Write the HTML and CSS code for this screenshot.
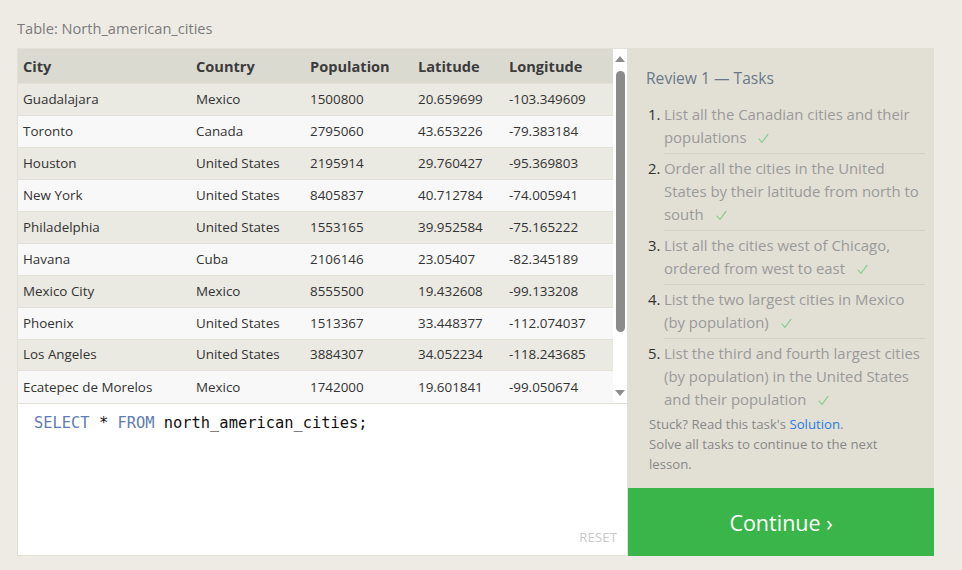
FILE: index.html
```html
<!DOCTYPE html>
<html>
<head>
<meta charset="utf-8">
<link rel="stylesheet" href="styles.css">
</head>
<body>
<div class="page">
  <div class="table-title">Table: North_american_cities</div>
  <div class="workspace">
    <div class="left">
      <div class="results">
        <table class="grid">
          <colgroup>
            <col class="c1"><col class="c2"><col class="c3"><col class="c4"><col class="c5">
          </colgroup>
          <thead>
            <tr><th>City</th><th>Country</th><th>Population</th><th>Latitude</th><th>Longitude</th></tr>
          </thead>
          <tbody>
            <tr><td>Guadalajara</td><td>Mexico</td><td>1500800</td><td>20.659699</td><td>-103.349609</td></tr>
            <tr><td>Toronto</td><td>Canada</td><td>2795060</td><td>43.653226</td><td>-79.383184</td></tr>
            <tr><td>Houston</td><td>United States</td><td>2195914</td><td>29.760427</td><td>-95.369803</td></tr>
            <tr><td>New York</td><td>United States</td><td>8405837</td><td>40.712784</td><td>-74.005941</td></tr>
            <tr><td>Philadelphia</td><td>United States</td><td>1553165</td><td>39.952584</td><td>-75.165222</td></tr>
            <tr><td>Havana</td><td>Cuba</td><td>2106146</td><td>23.05407</td><td>-82.345189</td></tr>
            <tr><td>Mexico City</td><td>Mexico</td><td>8555500</td><td>19.432608</td><td>-99.133208</td></tr>
            <tr><td>Phoenix</td><td>United States</td><td>1513367</td><td>33.448377</td><td>-112.074037</td></tr>
            <tr><td>Los Angeles</td><td>United States</td><td>3884307</td><td>34.052234</td><td>-118.243685</td></tr>
            <tr><td>Ecatepec de Morelos</td><td>Mexico</td><td>1742000</td><td>19.601841</td><td>-99.050674</td></tr>
          </tbody>
        </table>
        <div class="scrollbar">
          <span class="arrow up"></span>
          <span class="thumb"></span>
          <span class="arrow down"></span>
        </div>
      </div>
      <div class="editor">
        <div class="code"><span class="kw">SELECT</span> * <span class="kw">FROM</span> north_american_cities;</div>
        <div class="reset">RESET</div>
      </div>
    </div>
    <div class="right">
      <div class="tasks">
        <div class="tasks-title">Review 1 — Tasks</div>
        <ol class="task-list">
          <li><span class="num">1.</span><span class="txt">List all the Canadian cities and their populations&nbsp;<svg class="check" viewBox="0 0 12 12"><path d="M1.2 6.6 L4.4 10.2 L10.8 1.4"/></svg></span></li>
          <li><span class="num">2.</span><span class="txt">Order all the cities in the United States by their latitude from north to south&nbsp;<svg class="check" viewBox="0 0 12 12"><path d="M1.2 6.6 L4.4 10.2 L10.8 1.4"/></svg></span></li>
          <li><span class="num">3.</span><span class="txt">List all the cities west of Chicago, ordered from west to east&nbsp;<svg class="check" viewBox="0 0 12 12"><path d="M1.2 6.6 L4.4 10.2 L10.8 1.4"/></svg></span></li>
          <li><span class="num">4.</span><span class="txt">List the two largest cities in Mexico (by population)&nbsp;<svg class="check" viewBox="0 0 12 12"><path d="M1.2 6.6 L4.4 10.2 L10.8 1.4"/></svg></span></li>
          <li><span class="num">5.</span><span class="txt">List the third and fourth largest cities (by population) in the United States and their population&nbsp;<svg class="check" viewBox="0 0 12 12"><path d="M1.2 6.6 L4.4 10.2 L10.8 1.4"/></svg></span></li>
        </ol>
        <div class="hint">Stuck? Read this task's <a class="link">Solution</a>.</div>
        <div class="hint">Solve all tasks to continue to the next lesson.</div>
      </div>
      <div class="continue">Continue ›</div>
    </div>
  </div>
</div>
</body>
</html>
```

FILE: styles.css
```css
html, body {
  margin: 0;
  padding: 0;
  background: #eeebe4;
}
body {
  font-family: "Open Sans", "Noto Sans", sans-serif;
  color: #333;
}
.page {
  padding: 17px 0 0 17px;
}
.table-title {
  font-size: 14.6px;
  color: #7b7b7b;
  height: 23px;
  line-height: 22px;
  margin-bottom: 8px;
}
.workspace {
  display: flex;
  width: 917px;
  height: 508px;
}
.left {
  width: 611px;
  box-sizing: border-box;
  background: #fff;
  border: 1px solid #e2e0d8;
  display: flex;
  flex-direction: column;
}
.results {
  display: flex;
  height: 354px;
  border-bottom: 1px solid #e2e0d8;
}
.grid {
  width: 595px;
  border-collapse: collapse;
  table-layout: fixed;
  font-size: 13.4px;
}
.c1 { width: 173px; }
.c2 { width: 114px; }
.c3 { width: 108px; }
.c4 { width: 91px; }
.c5 { width: 109px; }
.grid th {
  background: #dbdad0;
  text-align: left;
  font-weight: 700;
  font-size: 14.6px;
  color: #3c3c3c;
  height: 34px;
  padding: 0 0 0 5px;
}
.grid td {
  height: 31px;
  padding: 0 0 1px 5px;
  box-sizing: border-box;
  border-top: 1px solid #e2e0d8;
  white-space: nowrap;
  color: #333;
}
.grid tbody tr:nth-child(odd) td { background: #eae9e2; }
.grid tbody tr:nth-child(even) td { background: #f8f8f8; }
.scrollbar {
  width: 15px;
  background: #fff;
  display: flex;
  flex-direction: column;
  align-items: center;
}
.arrow {
  width: 0;
  height: 0;
  border-left: 5px solid transparent;
  border-right: 5px solid transparent;
}
.arrow.up {
  margin-top: 7px;
  border-bottom: 6px solid #8d8d8d;
}
.arrow.down {
  margin-top: auto;
  margin-bottom: 7px;
  border-top: 6px solid #8d8d8d;
}
.thumb {
  margin-top: 9px;
  width: 9px;
  height: 261px;
  border-radius: 5px;
  background: #8b8b8b;
}
.editor {
  flex: 1;
  position: relative;
  padding: 8px 0 0 16px;
}
.code {
  font-family: "DejaVu Sans Mono", "Liberation Mono", monospace;
  font-size: 15.4px;
  line-height: 22px;
  color: #111;
}
.kw { color: #5f7cb3; }
.reset {
  position: absolute;
  right: 10px;
  bottom: 9px;
  font-size: 13px;
  color: #c9c9c9;
  letter-spacing: 0.2px;
}
.right {
  width: 306px;
  display: flex;
  flex-direction: column;
}
.tasks {
  flex: 1 1 0;
  min-height: 0;
  overflow: hidden;
  background: #e2e0d5;
  padding: 18px 9px 0 18px;
}
.tasks-title {
  font-size: 15.6px;
  color: #6a7889;
  line-height: 24px;
  margin-bottom: 13px;
}
.task-list {
  list-style: none;
  margin: 0;
  padding: 0;
}
.task-list li {
  display: flex;
  font-size: 14.9px;
  line-height: 23px;
}
.task-list .num {
  width: 16px;
  flex: none;
  padding-left: 2px;
  color: #333;
}
.task-list .txt {
  flex: 1;
  color: #9a9a9a;
  padding-bottom: 4px;
  margin-bottom: 3px;
  border-bottom: 1px solid #d3d1c6;
}
.task-list li:last-child .txt {
  border-bottom: none;
  padding-bottom: 0;
  margin-bottom: 3px;
}
.check {
  width: 11px;
  height: 11px;
  margin-left: 8px;
  vertical-align: -1px;
  fill: none;
  stroke: #86cd8c;
  stroke-width: 1.3;
  stroke-linecap: round;
  stroke-linejoin: round;
}
.hint {
  font-size: 13.2px;
  line-height: 20px;
  color: #888;
  padding-left: 3px;
  padding-right: 30px;
}
.link { color: #2a7be4; }
.continue {
  height: 68px;
  flex: none;
  background: #3ab54a;
  color: #fff;
  font-size: 21.5px;
  display: flex;
  align-items: center;
  justify-content: center;
}
```
